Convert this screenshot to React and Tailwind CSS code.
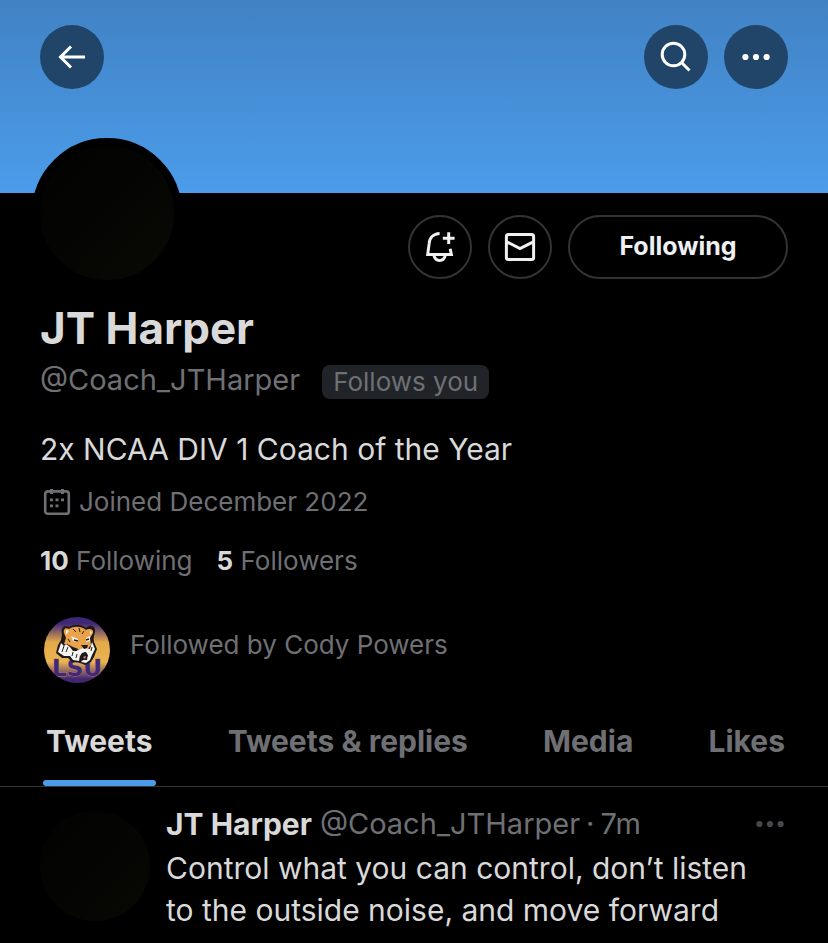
import React from "react";

function BackIcon() {
  return (
    <svg width="28" height="24" viewBox="0 0 28 24" fill="none" stroke="#fff" strokeWidth="3" aria-hidden="true">
      <path d="M27 12H2.500M13 1.500 2.500 12 13 22.500" />
    </svg>
  );
}

function SearchIcon() {
  return (
    <svg width="32" height="32" viewBox="0 0 32 32" fill="none" stroke="#fff" strokeWidth="3" aria-hidden="true">
      <circle cx="13.500" cy="13.500" r="11.300" />
      <path d="m21.500 21.500 8 8" />
    </svg>
  );
}

function DotsIcon() {
  return (
    <svg width="28" height="8" viewBox="0 0 28 8" fill="currentColor" aria-hidden="true">
      <circle cx="3.4" cy="4" r="3.1" />
      <circle cx="14" cy="4" r="3.1" />
      <circle cx="24.6" cy="4" r="3.1" />
    </svg>
  );
}

function BellPlusIcon() {
  return (
    <svg width="30" height="32" viewBox="0 0 30 32" fill="none" stroke="#eff0f1" strokeWidth="3" aria-hidden="true">
      <path d="M14.600 2.400C8.600 2.600 4.600 6.600 4.200 12.200L2.700 23.600H26.400L25.200 17.800" />
      <path d="M9 24.500C9.700 27.700 11.900 29.500 14.600 29.500S19.500 27.700 20.200 24.500" />
      <path d="M17.800 7.200H29.600M23.700 1.300V13.100" />
    </svg>
  );
}

function MailIcon() {
  return (
    <svg width="32" height="30" viewBox="0 0 32 30" fill="none" stroke="#eff0f1" strokeWidth="3" aria-hidden="true">
      <rect x="2.400" y="2.400" width="27.200" height="25.200" rx="2" />
      <path d="m2.800 9.800 13.200 6.800 13.200-6.800" />
    </svg>
  );
}

function CalendarIcon() {
  return (
    <svg width="28" height="28" viewBox="0 0 28 28" fill="none" stroke="#6f7074" strokeWidth="2.600" aria-hidden="true">
      <rect x="2.200" y="3.400" width="23.600" height="22.400" rx="2.600" />
      <path d="M8.500 1v5M19.500 1v5" strokeWidth="3" />
      <path d="M7 11.800h3M12.500 11.800h3M18 11.800h3M7 17.800h3M12.500 17.800h3" strokeWidth="2.800" />
    </svg>
  );
}

function TigerBadge() {
  return (
    <svg className="size-[66px] shrink-0" viewBox="0 0 66 66" role="img" aria-label="LSU">
      <defs>
        <linearGradient id="badgeFill" x1="0" y1="0" x2="0" y2="1">
          <stop offset="0.100" stopColor="#3f2878" />
          <stop offset="0.380" stopColor="#e3a848" />
          <stop offset="0.680" stopColor="#ecb550" />
          <stop offset="0.940" stopColor="#412673" />
        </linearGradient>
        <clipPath id="badgeClip"><circle cx="33" cy="33" r="33" /></clipPath>
      </defs>
      <g clipPath="url(#badgeClip)">
        <rect width="66" height="66" fill="url(#badgeFill)" />
        <text x="33" y="59" textAnchor="middle" className="font-['DejaVu_Sans'] text-[23px] font-bold" fill="#42277a" stroke="#b98755" strokeWidth="0.800" paintOrder="stroke">LSU</text>
        <path d="M18 17C16 11 21 7 25 10C30 7 37 7 42 11C45 7 52 8 51 15C50 19 49 21 50 25L53 32L50 40L47 45L41 48L34 45L28 45L24 41L18 41L12 36L14 28L17 23Z" fill="#1d1a1a" />
        <path d="M20 16C19 12 22 10 25 12C30 9 37 9 42 13C45 11 50 12 49 16L46 21L47 28L44 32L37 33L29 30L23 27L20 27L22 21Z" fill="#eba34a" />
        <path d="M17 26L20 29L22 27L26 30L29 34L34 34L36 38L35 44L29 43L26 39L20 39L14 35ZM48 25L51 32L48 38L46 43L42 46L37 45L39 43L43 43L44 36L46 32Z" fill="#f6f4f2" />
        <path d="M33 33L40 31L46 32L47 37L44 39L42 35L38 36L36 39Z" fill="#f6f4f2" />
        <path d="M37 28L44 28L43 31L40 32ZM37 38L41 35L44 38L42 43L39 43Z" fill="#1d1a1a" />
        <path d="M39 40L42 39L41 42Z" fill="#d99286" />
        <path d="M27 19L34 22L34 25L29 24ZM42 21L46 19L46 24L42 25ZM22 13L25 14L22 18ZM46 14L48 15L46 18Z" fill="#f6f4f2" />
        <path d="M30 23L34 24M42 23L45 22" stroke="#1d1a1a" strokeWidth="1.600" />
        <path d="M29 12L32 15M35 11L36 15M40 14L38 17M24 22L26 25M20 29L18 35M24 30L22 35M29 35L28 39M33 37L32 41M48 30L47 34" fill="none" stroke="#1d1a1a" strokeWidth="1" />
      </g>
    </svg>
  );
}

const tabs = ["Tweets", "Tweets & replies", "Media", "Likes"];

export default function App() {
  return (
    <div className="min-h-screen bg-black font-['Inter',sans-serif] text-[#d9d9d9]">
      <header className="flex h-[193px] items-start gap-4 bg-linear-to-b from-[#4182c4] to-[#4b9cea] px-10 pt-[25px] text-white">
        <button aria-label="Back" className="mr-auto flex size-16 items-center justify-center rounded-full bg-[#204568]">
          <BackIcon />
        </button>
        <button aria-label="Search" className="flex size-16 items-center justify-center rounded-full bg-[#204568]">
          <SearchIcon />
        </button>
        <button aria-label="More options" className="flex size-16 items-center justify-center rounded-full bg-[#204568]">
          <DotsIcon />
        </button>
      </header>

      <main>
        <section className="px-10">
          <div className="flex items-start justify-between">
            <div className="-mt-[55px] -ml-2 size-[150px] shrink-0 rounded-full border-8 border-black bg-linear-to-br from-[#020301] to-[#090a05]" />
            <div className="flex gap-4 pt-[22px]">
              <button aria-label="Notify me" className="flex size-16 items-center justify-center rounded-full border-2 border-[#323335]">
                <BellPlusIcon />
              </button>
              <button aria-label="Message" className="flex size-16 items-center justify-center rounded-full border-2 border-[#323335]">
                <MailIcon />
              </button>
              <button className="h-16 w-[220px] rounded-full border-2 border-[#323335] text-[25px] font-bold text-[#eff0f1]">
                Following
              </button>
            </div>
          </div>

          <h1 className="mt-4 text-[44px] leading-[48px] font-bold">JT Harper</h1>
          <div className="mt-2 flex items-center gap-[22px] text-[#6f7074]">
            <span className="text-[29px] leading-10">@Coach_JTHarper</span>
            <span className="mt-1 rounded-lg bg-[#202327] px-[11px] text-[26px] leading-[34px]">Follows you</span>
          </div>
          <p className="mt-[29px] text-[30px] leading-10">2x NCAA DIV 1 Coach of the Year</p>
          <p className="mt-[13px] flex items-center gap-2 pl-[3px] text-[26px] leading-10 text-[#6f7074]">
            <CalendarIcon />
            Joined December 2022
          </p>
          <div className="mt-[19px] flex gap-6 text-[26px] leading-10 text-[#6f7074]">
            <a href="#following"><b className="text-[#d9d9d9]">10</b> Following</a>
            <a href="#followers"><b className="text-[#d9d9d9]">5</b> Followers</a>
          </div>
          <div className="mt-9 flex items-start gap-5 pl-1 text-[26px] text-[#6f7074]">
            <TigerBadge />
            <p className="pt-2 leading-10">Followed by Cody Powers</p>
          </div>
        </section>

        <nav className="mt-[33px] flex justify-between border-b border-[#36373a] pr-10 pl-[43px]">
          {tabs.map((tab, i) => (
            <button key={tab} className={i === 0 ? "flex flex-col text-[30px] font-bold" : "flex flex-col text-[30px] font-bold text-[#6f7074]"}>
              <span className="px-[3px] pt-1 pb-[18px] leading-[42px]">{tab}</span>
              {i === 0 && <span className="h-[6px] w-full rounded-full bg-[#4b9cea]" />}
            </button>
          ))}
        </nav>

        <article className="flex gap-4 px-10 pt-4">
          <div className="mt-2 size-[110px] shrink-0 rounded-full bg-linear-to-br from-[#020301] to-[#080904]" />
          <div className="min-w-0 flex-1 text-[30px] leading-[42px]">
            <div className="flex items-center pb-[2px]">
              <b>JT Harper</b>
              <span className="flex gap-[6px] pl-2 text-[29px] text-[#6f7074]">
                <span>@Coach_JTHarper</span>
                <span>·</span>
                <span>7m</span>
              </span>
              <button aria-label="Tweet options" className="mr-1 ml-auto text-[#47484b]"><DotsIcon /></button>
            </div>
            <p className="pr-6">Control what you can control, don’t listen to the outside noise, and move forward</p>
          </div>
        </article>
      </main>
    </div>
  );
}
